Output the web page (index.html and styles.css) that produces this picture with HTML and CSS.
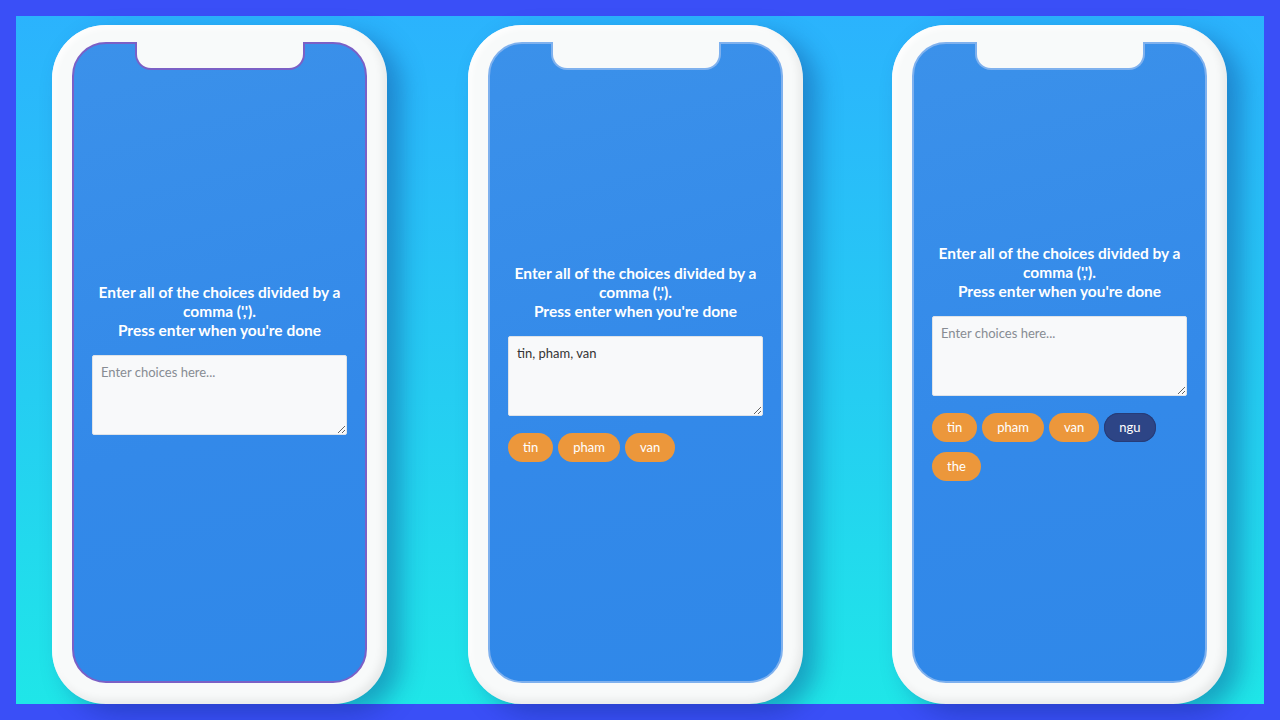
FILE: index.html
```html
<!DOCTYPE html>
<html lang="en">
<head>
<meta charset="utf-8">
<title>Choice picker</title>
<link rel="stylesheet" href="styles.css">
</head>
<body>
<div class="stage">
  <div class="phone">
    <div class="screen screen-purple">
      <div class="notch"></div>
      <div class="content">
        <p class="prompt">Enter all of the choices divided by a comma (',').<br>Press enter when you're done</p>
        <textarea class="choices" placeholder="Enter choices here..."></textarea>
        <div class="chips chips-empty"></div>
      </div>
    </div>
  </div>
  <div class="phone phone-second">
    <div class="screen">
      <div class="notch"></div>
      <div class="content">
        <p class="prompt">Enter all of the choices divided by a comma (',').<br>Press enter when you're done</p>
        <textarea class="choices">tin, pham, van</textarea>
        <div class="chips">
          <span class="chip">tin</span>
          <span class="chip">pham</span>
          <span class="chip">van</span>
        </div>
      </div>
    </div>
  </div>
  <div class="phone phone-third">
    <div class="screen">
      <div class="notch"></div>
      <div class="content">
        <p class="prompt">Enter all of the choices divided by a comma (',').<br>Press enter when you're done</p>
        <textarea class="choices" placeholder="Enter choices here..."></textarea>
        <div class="chips">
          <span class="chip">tin</span>
          <span class="chip">pham</span>
          <span class="chip">van</span>
          <span class="chip chip-active">ngu</span>
          <span class="chip">the</span>
        </div>
      </div>
    </div>
  </div>
</div>
</body>
</html>
```
FILE: styles.css
```css
html, body {
  margin: 0;
  padding: 0;
}
body {
  width: 1280px;
  height: 720px;
  background: #3a4ff7;
  padding: 16px;
  box-sizing: border-box;
  overflow: hidden;
  font-family: Lato, "Open Sans", sans-serif;
}
.stage {
  height: 688px;
  box-sizing: border-box;
  padding: 9px 0 0 36px;
  background: linear-gradient(180deg, #2bb3fd 0%, #25cdf2 55%, #1fe6e8 100%);
  display: flex;
  align-items: flex-start;
}
.phone {
  width: 335px;
  height: 679px;
  box-sizing: border-box;
  padding: 17px 20px 21px 20px;
  background: #f8fafa;
  border-radius: 54px;
  box-shadow: 14px 10px 24px rgba(10, 40, 120, 0.35), inset -4px -4px 8px rgba(0, 0, 0, 0.07), inset 3px 3px 6px rgba(255, 255, 255, 0.9);
  display: flex;
}
.phone-second {
  margin-left: 81px;
}
.phone-third {
  margin-left: 89px;
}
.screen {
  position: relative;
  flex: 1;
  border: 2px solid #7fb1ee;
  border-radius: 34px;
  background: linear-gradient(165deg, #3b91ea 0%, #3389e9 60%, #2f88e9 100%);
  display: flex;
  flex-direction: column;
  justify-content: center;
  align-items: center;
}
.screen-purple {
  border-color: #7b60c6;
}
.notch {
  position: absolute;
  top: -2px;
  left: 50%;
  transform: translateX(-50%);
  width: 166px;
  height: 26px;
  background: #f8fafa;
  border: 2px solid #7fb1ee;
  border-top: none;
  border-radius: 0 0 16px 16px;
}
.screen-purple .notch {
  border-color: #7b60c6;
}
.content {
  width: 255px;
  display: flex;
  flex-direction: column;
}
.prompt {
  margin: 0 0 15px 0;
  color: #ffffff;
  font-weight: 700;
  font-size: 15.5px;
  line-height: 19px;
  text-align: center;
}
.choices {
  display: block;
  width: 255px;
  height: 80px;
  box-sizing: border-box;
  margin: 0;
  padding: 8px;
  border: 1px solid #dfe3e8;
  border-radius: 2px;
  background: #f8f9fa;
  color: #333333;
  font-family: Lato, "Open Sans", sans-serif;
  font-size: 13px;
  line-height: 16px;
  resize: vertical;
}
.choices::placeholder {
  color: #878c93;
}
.chips {
  margin-top: 17px;
  display: flex;
  flex-wrap: wrap;
  gap: 10px 5px;
}
.chips-empty {
  margin-top: 7px;
}
.chip {
  height: 29px;
  box-sizing: border-box;
  padding: 0 15px;
  border-radius: 15px;
  background: #ec973b;
  color: #ffffff;
  font-size: 13px;
  line-height: 29px;
}
.chip-active {
  background: #2d4586;
  box-shadow: inset 0 0 0 1px #263c78;
}
```
